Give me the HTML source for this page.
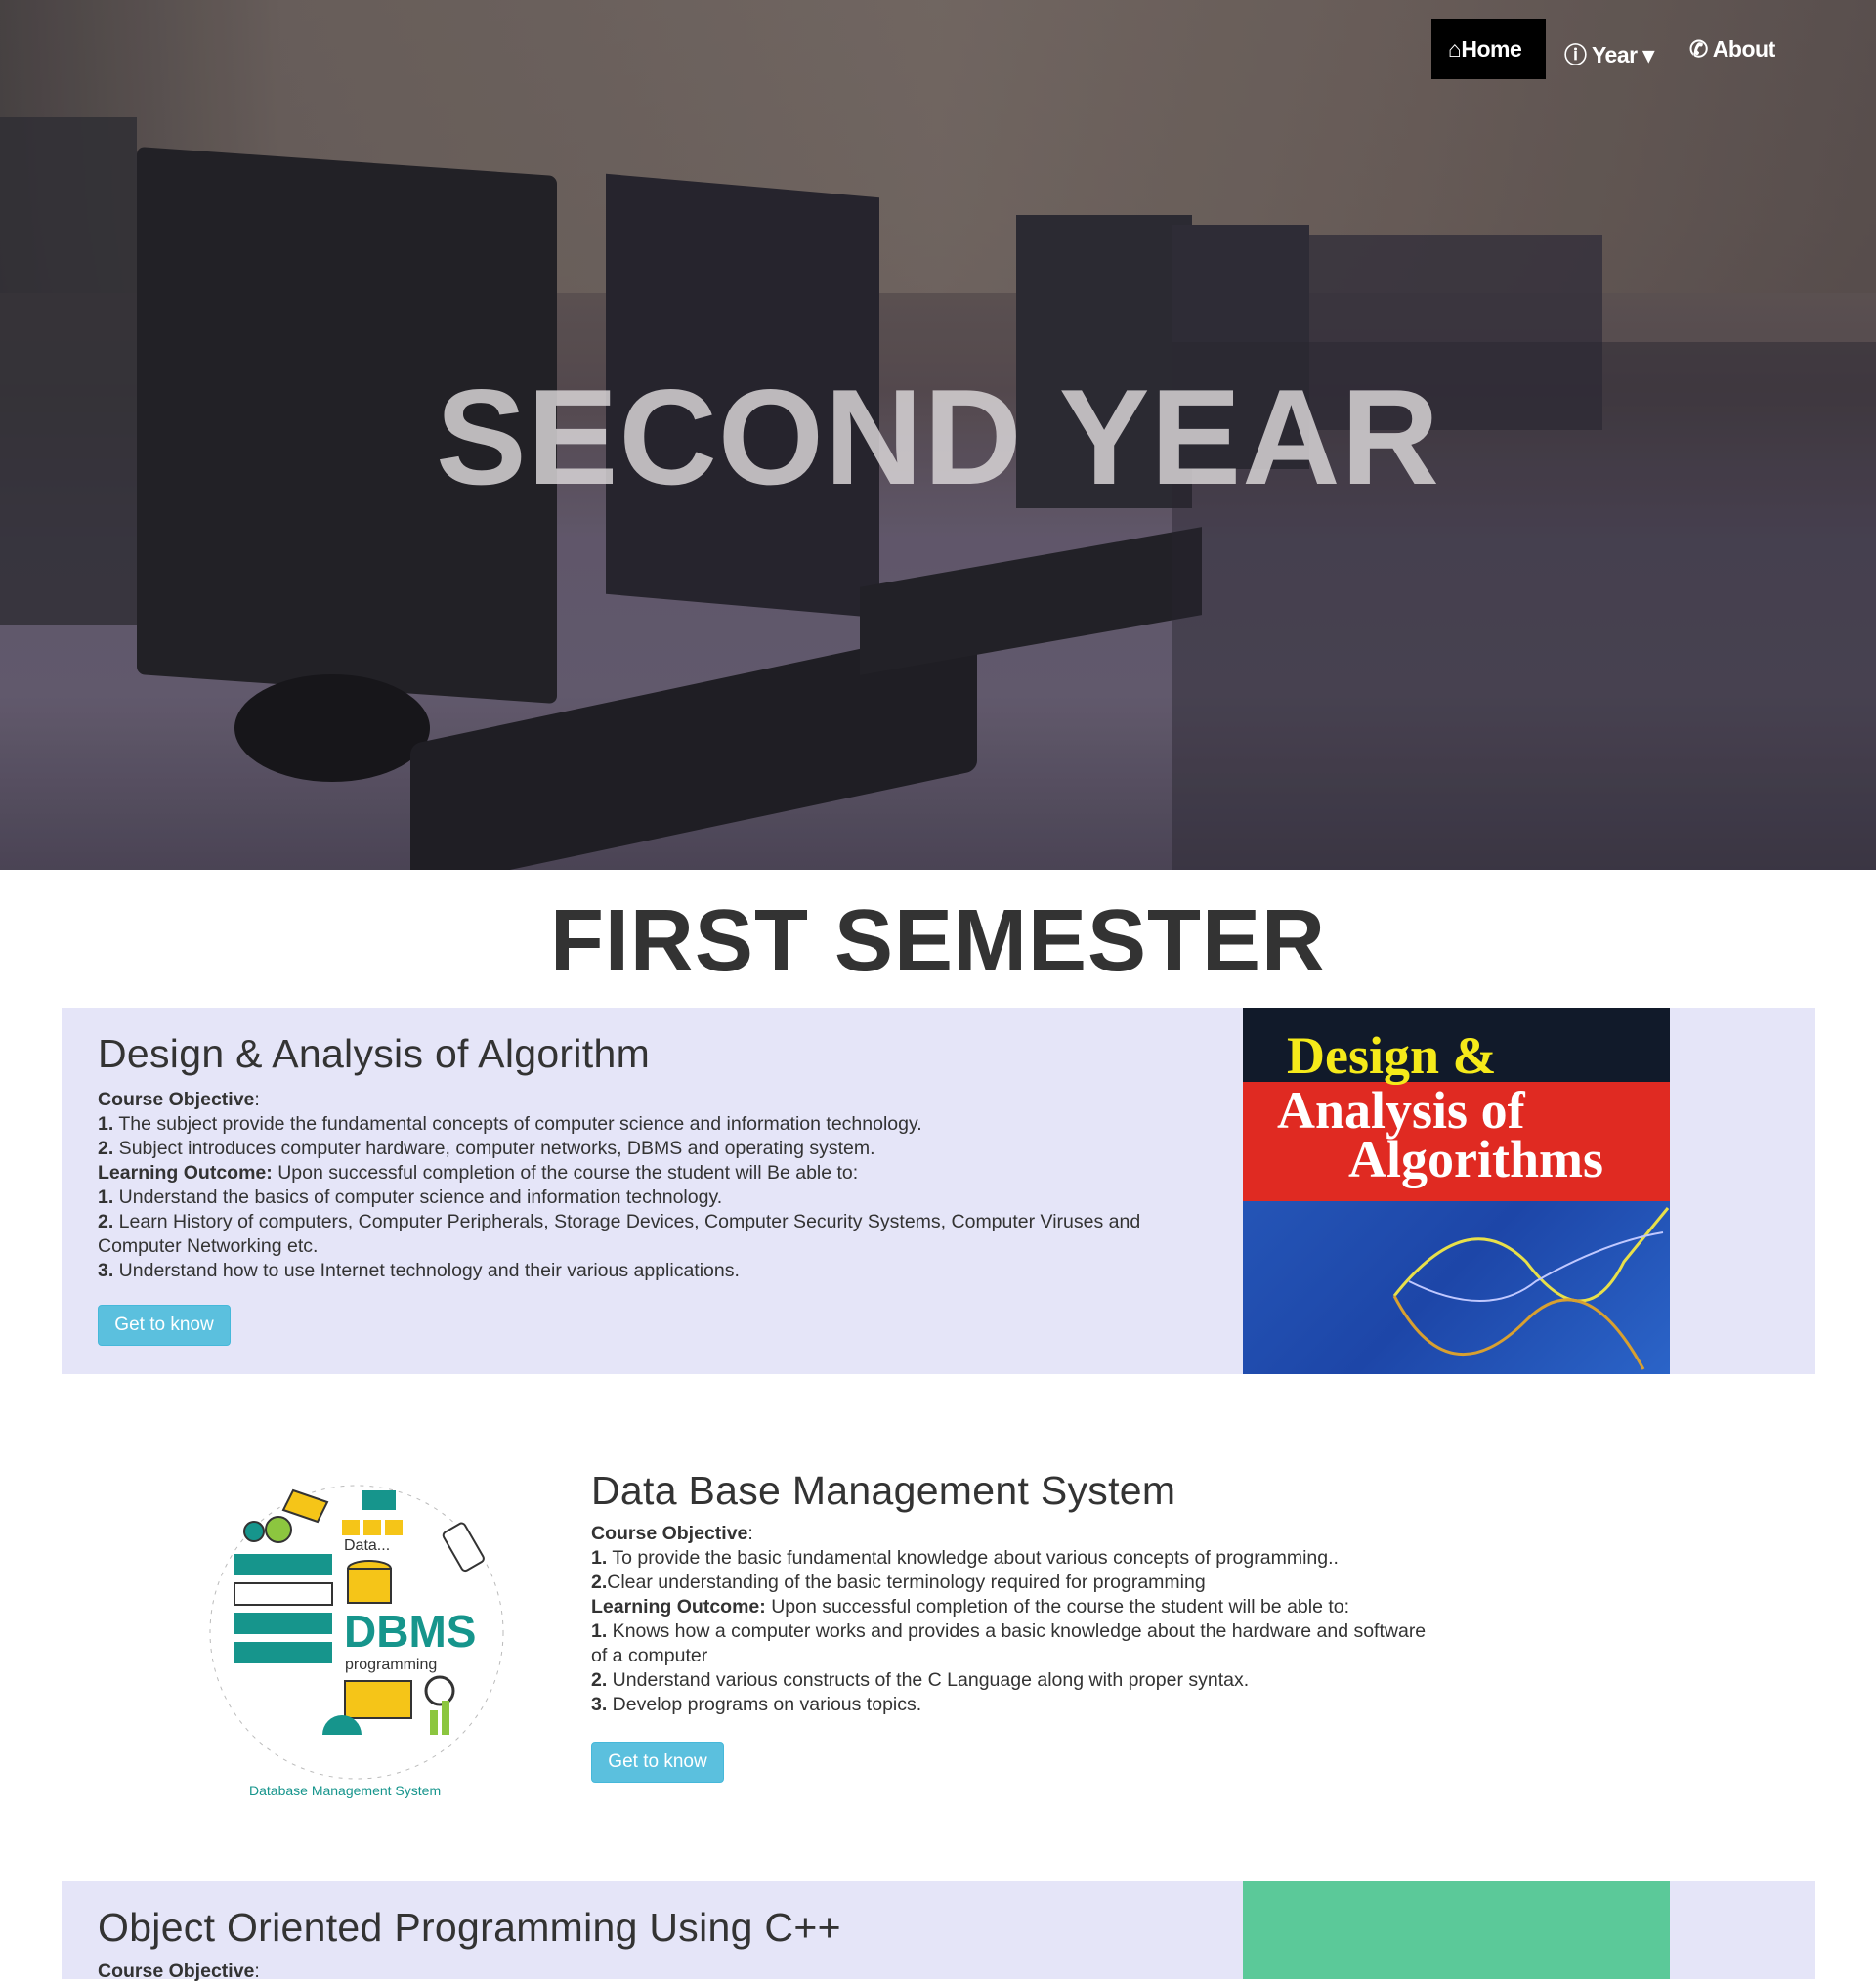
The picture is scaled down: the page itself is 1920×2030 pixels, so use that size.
<!DOCTYPE html>
<html><head><meta charset="utf-8"><style>
*{margin:0;padding:0;box-sizing:border-box}
body{width:1920px;height:2020px;overflow:hidden;background:#fff;font-family:"Liberation Sans",sans-serif;color:#333;position:relative}
.hero{position:absolute;left:0;top:0;width:1920px;height:890px;overflow:hidden;
background:linear-gradient(180deg,#6a6057 0%,#635950 25%,#54494a 45%,#62596a 62%,#645c6c 80%,#4a4452 100%)}
.abs{position:absolute}
.nav a{position:absolute;color:#fff;font-weight:bold;font-size:23px;text-decoration:none;letter-spacing:-0.5px}
.sec{position:absolute;left:63px;width:1795px;background:#e5e5f8}
h2{font-weight:normal;font-size:41px;color:#333;position:absolute;letter-spacing:0.3px}
.txt{position:absolute;font-size:19.5px;line-height:25px;color:#333}
.btn{position:absolute;background:#5bc0de;color:#fff;font-size:19px;border-radius:4px;border:1px solid #46b8da;width:136px;height:42px;line-height:40px;text-align:center}
</style></head><body>
<div class="hero">
 <div class="abs" style="left:0;top:0;width:1920px;height:300px;background:linear-gradient(90deg,#3e3a38 0%,#6a6058 15%,#776c62 50%,#6a5e55 75%,#574d47 100%);opacity:.8"></div>
 <div class="abs" style="left:140px;top:165px;width:430px;height:540px;background:#1d1d1f;transform:skewY(4deg);border-radius:8px"></div>
 <div class="abs" style="left:240px;top:690px;width:200px;height:110px;background:#111;border-radius:50%"></div>
 <div class="abs" style="left:620px;top:190px;width:280px;height:430px;background:#222126;transform:skewY(5deg)"></div>
 <div class="abs" style="left:1040px;top:220px;width:180px;height:300px;background:#28272c"></div>
 <div class="abs" style="left:1200px;top:230px;width:140px;height:250px;background:#2b2a30"></div>
 <div class="abs" style="left:1340px;top:240px;width:300px;height:200px;background:#2f2d34;opacity:.8"></div>
 <div class="abs" style="left:0;top:120px;width:140px;height:520px;background:#2a2a2d;opacity:.8"></div>
 <div class="abs" style="left:420px;top:700px;width:580px;height:150px;background:#1a1a1c;transform:skewY(-12deg);border-radius:10px"></div>
 <div class="abs" style="left:880px;top:570px;width:350px;height:90px;background:#1e1e20;transform:skewY(-10deg)"></div>
 <div class="abs" style="left:1200px;top:350px;width:720px;height:540px;background:#232128;opacity:.45"></div>
 <div class="abs" style="left:0;top:0;width:1920px;height:890px;background:rgba(80,70,110,.1)"></div>
 <div class="abs" style="left:0;top:368px;width:1920px;text-align:center;font-size:139px;font-weight:bold;color:#d8d4d6;letter-spacing:1px;opacity:.85">SECOND YEAR</div>
 <div class="nav">
  <div class="abs" style="left:1465px;top:19px;width:117px;height:62px;background:#000"></div>
  <a style="left:1482px;top:37px">⌂Home</a>
  <a style="left:1601px;top:37px">ⓘ Year ▾</a>
  <a style="left:1729px;top:37px">✆ About</a>
 </div>
</div>
<div class="abs" style="left:0;top:912px;width:1920px;text-align:center;font-size:90px;font-weight:bold;color:#333;letter-spacing:1px">FIRST SEMESTER</div>

<div class="sec" style="top:1031px;height:375px">
 <h2 style="left:37px;top:24px">Design &amp; Analysis of Algorithm</h2>
 <div class="txt" style="left:37px;top:82px;width:1130px">
 <b>Course Objective</b>:<br><b>1.</b> The subject provide the fundamental concepts of computer science and information technology.<br><b>2.</b> Subject introduces computer hardware, computer networks, DBMS and operating system.<br><b>Learning Outcome:</b> Upon successful completion of the course the student will Be able to:<br><b>1.</b> Understand the basics of computer science and information technology.<br><b>2.</b> Learn History of computers, Computer Peripherals, Storage Devices, Computer Security Systems, Computer Viruses and<br>Computer Networking etc.<br><b>3.</b> Understand how to use Internet technology and their various applications.</div>
 <div class="btn" style="left:37px;top:304px">Get to know</div>
 <div class="abs" style="left:1209px;top:0;width:437px;height:375px;background:linear-gradient(135deg,#2a5fc0,#1d46a8 60%,#2b64c8);overflow:hidden">
  <div class="abs" style="left:0;top:0;width:437px;height:76px;background:#111a2a"></div>
  <div class="abs" style="left:0;top:76px;width:437px;height:122px;background:#e02a22"></div>
  <div class="abs" style="left:45px;top:22px;font-family:'Liberation Serif',serif;font-weight:bold;font-size:54px;color:#f5ea1a;line-height:54px">Design &amp;</div>
  <div class="abs" style="left:35px;top:78px;font-family:'Liberation Serif',serif;font-weight:bold;font-size:54px;color:#fff;line-height:54px">Analysis of</div>
  <div class="abs" style="left:108px;top:128px;font-family:'Liberation Serif',serif;font-weight:bold;font-size:54px;color:#fff;line-height:54px">Algorithms</div>
  <svg class="abs" style="left:150px;top:200px" width="290" height="175"><path d="M5,95 Q80,0 140,60 Q200,140 240,60 L285,5" stroke="#e8e04a" stroke-width="3" fill="none"/><path d="M5,95 Q60,200 140,120 Q200,60 260,170" stroke="#d8a030" stroke-width="3" fill="none"/><path d="M20,80 Q100,120 150,80 Q220,40 280,30" stroke="#c0c8ff" stroke-width="2" fill="none"/></svg>
 </div>
</div>

<svg class="abs" style="left:200px;top:1505px" width="330" height="340">
 <circle cx="165" cy="165" r="150" fill="none" stroke="#bbb" stroke-dasharray="4 6"/>
 <rect x="40" y="85" width="100" height="22" fill="#16958c"/><rect x="40" y="115" width="100" height="22" fill="#fff" stroke="#333" stroke-width="2"/><rect x="40" y="145" width="100" height="22" fill="#16958c"/><rect x="40" y="175" width="100" height="22" fill="#16958c"/>
 <ellipse cx="178" cy="100" rx="22" ry="8" fill="#f5c518" stroke="#333" stroke-width="2"/><rect x="156" y="100" width="44" height="35" fill="#f5c518" stroke="#333" stroke-width="2"/>
 <rect x="170" y="20" width="35" height="20" fill="#16958c"/><rect x="150" y="50" width="18" height="16" fill="#f5c518"/><rect x="172" y="50" width="18" height="16" fill="#f5c518"/><rect x="194" y="50" width="18" height="16" fill="#f5c518"/>
 <path d="M100,20 l35,12 -10,20 -35,-12z" fill="#f5c518" stroke="#333" stroke-width="2"/>
 <circle cx="85" cy="60" r="13" fill="#8cc63f" stroke="#333" stroke-width="2"/><circle cx="60" cy="62" r="10" fill="#16958c" stroke="#333" stroke-width="2"/>
 <text x="152" y="180" font-family="Liberation Sans" font-weight="bold" font-size="46" fill="#16958c">DBMS</text>
 <text x="153" y="203" font-family="Liberation Sans" font-size="16" fill="#333">programming</text>
 <text x="152" y="81" font-family="Liberation Sans" font-size="16" fill="#333">Data...</text>
 <rect x="153" y="215" width="68" height="38" fill="#f5c518" stroke="#333" stroke-width="2"/>
 <path d="M130,270 a20,20 0 0 1 40,0z" fill="#16958c"/>
 <rect x="262" y="55" width="25" height="45" rx="4" fill="#fff" stroke="#333" stroke-width="2" transform="rotate(-30 275 78)"/>
 <circle cx="250" cy="225" r="14" fill="none" stroke="#333" stroke-width="3"/>
 <rect x="240" y="245" width="8" height="25" fill="#8cc63f"/><rect x="252" y="235" width="8" height="35" fill="#8cc63f"/>
 <text x="55" y="332" font-family="Liberation Sans" font-size="14" fill="#16958c">Database Management System</text>
</svg>
<h2 style="left:605px;top:1502px">Data Base Management System</h2>
<div class="txt" style="left:605px;top:1557px;width:880px">
<b>Course Objective</b>:<br><b>1.</b> To provide the basic fundamental knowledge about various concepts of programming..<br><b>2.</b>Clear understanding of the basic terminology required for programming<br><b>Learning Outcome:</b> Upon successful completion of the course the student will be able to:<br><b>1.</b> Knows how a computer works and provides a basic knowledge about the hardware and software<br>of a computer<br><b>2.</b> Understand various constructs of the C Language along with proper syntax.<br><b>3.</b> Develop programs on various topics.</div>
<div class="btn" style="left:605px;top:1782px">Get to know</div>

<div class="sec" style="top:1925px;height:100px">
 <h2 style="left:37px;top:24px">Object Oriented Programming Using C++</h2>
 <div class="txt" style="left:37px;top:80px"><b>Course Objective</b>:</div>
 <div class="abs" style="left:1209px;top:0;width:437px;height:100px;background:#5bc999"></div>
</div>
</body></html>
